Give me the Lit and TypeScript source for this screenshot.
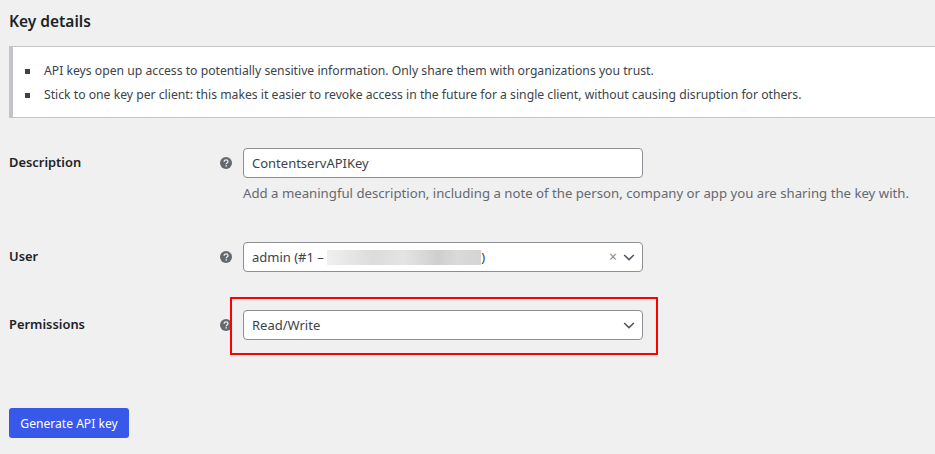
import { LitElement, html, css } from "lit";
import { customElement } from "lit/decorators.js";

const help = html`<svg class="help" viewBox="0 0 12 12" aria-hidden="true"><circle cx="6" cy="6" r="6" fill="#646970"/><path d="M4.1 4.7c0-1.2.8-1.9 2-1.9s1.9.7 1.9 1.6c0 .8-.4 1.2-1 1.6-.5.3-.7.5-.7 1v.2" fill="none" stroke="#f0f0f1" stroke-width="1.3"/><rect x="5.5" y="8.2" width="1.4" height="1.4" fill="#f0f0f1"/></svg>`;
const chev = html`<svg class="chev" viewBox="0 0 13 8" aria-hidden="true"><path d="M1 1.2l5.5 5.2L12 1.2" fill="none" stroke="#50575e" stroke-width="1.8"/></svg>`;

@customElement("app-root")
export class AppRoot extends LitElement {
  static styles = css`
    :host {
      display: block;
      width: 935px;
      height: 454px;
      overflow: hidden;
      background: #f0f0f1;
      font-family: "Noto Sans", "Open Sans", sans-serif;
      font-size: 13px;
      color: #3c434a;
      position: relative;
    }
    .page { padding: 12px 0 0 9px; display: flex; flex-direction: column; }
    h2 { margin: 0; font-size: 15.5px; line-height: 18px; font-weight: 600; color: #1d2327; }
    .notice {
      margin-top: 16px;
      width: 940px;
      box-sizing: border-box;
      height: 72px;
      background: #fff;
      border: 1px solid #c3c4c7;
      border-left-width: 4px;
      display: flex;
      flex-direction: column;
      justify-content: center;
      gap: 6px;
      padding: 2px 0 0 9px;
      font-size: 12.2px;
    }
    .li { display: flex; align-items: center; gap: 14px; line-height: 18px; white-space: nowrap; }
    .li i { width: 5px; height: 5px; background: #3c434a; flex: none; margin-left: 3px; }
    .row { display: grid; grid-template-columns: 210px 24px 1fr; align-items: start; }
    .r1 { margin-top: 30px; height: 94px; }
    .r2 { height: 68px; }
    .r3 { height: 98px; }
    label { font-weight: 600; color: #1d2327; font-size: 12.9px; line-height: 28px; height: 30px; }
    .hcell { height: 30px; display: flex; align-items: center; padding-left: 1px; }
    .help { width: 12px; height: 12px; display: block; }
    .field {
      box-sizing: border-box;
      width: 400px;
      height: 30px;
      background: #fff;
      border: 1px solid #8c8f94;
      border-radius: 4px;
      display: flex;
      align-items: center;
      padding: 0 7px 0 8px;
      color: #3c434a;
      line-height: 28px;
    }
    .grow { flex: 1; display: flex; align-items: center; white-space: pre; }
    .blur {
      display: block;
      width: 154px;
      height: 15px;
      background: linear-gradient(90deg, #f0f0f0, #dcdcdc 30%, #e4e4e4 50%, #cfcfcf 72%, #dadada 85%, #d4d4d4);
    }
    .x { color: #8a8a8a; font-size: 14px; margin-right: 6px; line-height: 1; }
    .chev { width: 12px; height: 7px; display: block; }
    .desc { margin-top: 6px; color: #646970; line-height: 18px; white-space: nowrap; font-size: 13.2px; }
    button {
      align-self: flex-start;
      font: inherit;
      font-size: 12.1px;
      width: 120px;
      height: 30px;
      border: 0;
      border-radius: 3px;
      background: #3858e9;
      color: #fff;
      padding: 0;
    }
    .mark {
      position: absolute;
      left: 230px;
      top: 297px;
      width: 428px;
      height: 58px;
      box-sizing: border-box;
      border: 2px solid #f00;
    }
  `;

  render() {
    return html`
      <div class="page">
        <h2>Key details</h2>
        <div class="notice">
          <div class="li"><i></i><span>API keys open up access to potentially sensitive information. Only share them with organizations you trust.</span></div>
          <div class="li"><i></i><span>Stick to one key per client: this makes it easier to revoke access in the future for a single client, without causing disruption for others.</span></div>
        </div>
        <div class="row r1">
          <label>Description</label>
          <div class="hcell">${help}</div>
          <div>
            <div class="field"><span class="grow">ContentservAPIKey</span></div>
            <div class="desc">Add a meaningful description, including a note of the person, company or app you are sharing the key with.</div>
          </div>
        </div>
        <div class="row r2">
          <label>User</label>
          <div class="hcell">${help}</div>
          <div class="field"><span class="grow">admin (#1 – <span class="blur"></span>)</span><span class="x">×</span>${chev}</div>
        </div>
        <div class="row r3">
          <label>Permissions</label>
          <div class="hcell">${help}</div>
          <div class="field"><span class="grow">Read/Write</span>${chev}</div>
        </div>
        <button>Generate API key</button>
      </div>
      <div class="mark"></div>
    `;
  }
}
